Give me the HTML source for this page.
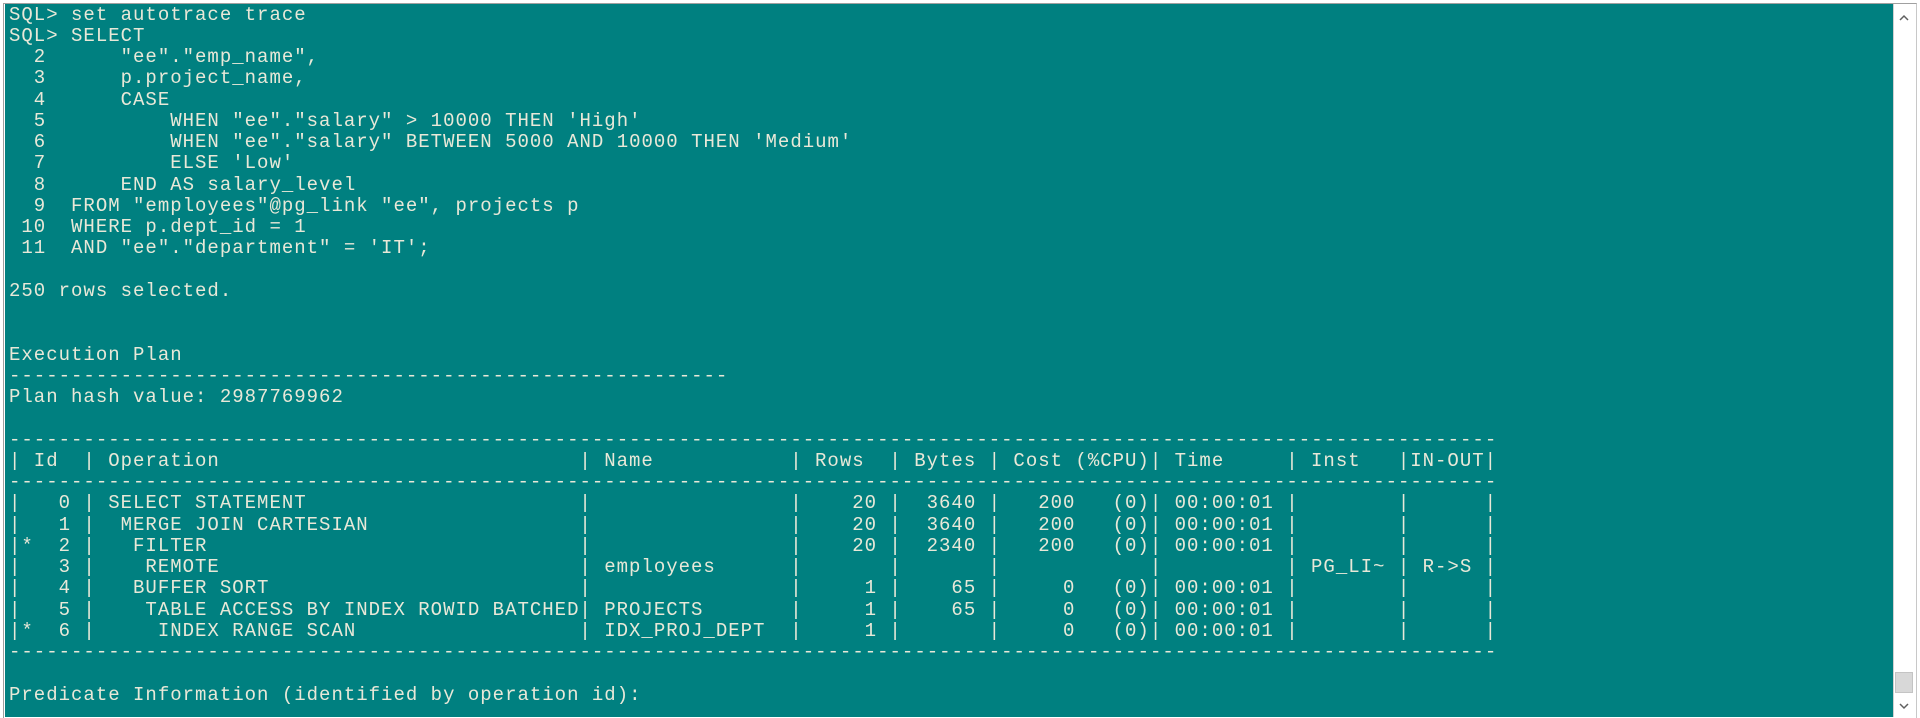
<!DOCTYPE html>
<html><head><meta charset="utf-8"><style>
html,body{margin:0;padding:0;background:#fff;width:1920px;height:717px;overflow:hidden}
#frame{position:absolute;left:3px;top:3px;width:1912px;height:714px;border-top:1px solid #a0a0a0;border-left:1px solid #a0a0a0;border-right:1px solid #c8c8c8;background:#fff}
#term{position:absolute;left:5px;top:4px;width:1888px;height:713px;background:#008080;overflow:hidden}
pre{margin:0;position:absolute;left:4px;top:0.5px;font-family:"Liberation Mono",monospace;font-size:19px;letter-spacing:1px;line-height:21.25px;color:#e8e8d8;white-space:pre}
.f{display:inline-block;white-space:pre}
.a{width:62px}.b{width:483.6px}.c{width:198.4px}.d{width:86.8px}.e{width:148.8px}.g{width:124px}.h{width:99.2px}.i{width:74.4px}
#sb{position:absolute;left:1893px;top:4px;width:20px;height:713px;background:#fff;border-left:1px solid #d0d0d0}
.ar{position:absolute;left:0;width:20px;height:20px}
#thumb{position:absolute;left:1px;top:668px;width:18px;height:21px;background:#d8d8d8;border:1px solid #c4c4c4;box-sizing:border-box}
</style></head><body>
<div id="frame"></div>
<div id="term"><pre>SQL&gt; set autotrace trace
SQL&gt; SELECT
  2      "ee"."emp_name",
  3      p.project_name,
  4      CASE
  5          WHEN "ee"."salary" &gt; 10000 THEN 'High'
  6          WHEN "ee"."salary" BETWEEN 5000 AND 10000 THEN 'Medium'
  7          ELSE 'Low'
  8      END AS salary_level
  9  FROM "employees"@pg_link "ee", projects p
 10  WHERE p.dept_id = 1
 11  AND "ee"."department" = 'IT';

250 rows selected.


Execution Plan
----------------------------------------------------------
Plan hash value: 2987769962

------------------------------------------------------------------------------------------------------------------------
|<span class="f a"> Id  </span>|<span class="f b"> Operation</span>|<span class="f c"> Name</span>|<span class="f d"> Rows  </span>|<span class="f d"> Bytes </span>|<span class="f e"> Cost (%CPU)</span>|<span class="f g"> Time     </span>|<span class="f h"> Inst   </span>|<span class="f i">IN-OUT</span>|
------------------------------------------------------------------------------------------------------------------------
|<span class="f a">   0 </span>|<span class="f b"> SELECT STATEMENT</span>|<span class="f c"></span>|<span class="f d">    20 </span>|<span class="f d">  3640 </span>|<span class="f e">   200   (0)</span>|<span class="f g"> 00:00:01 </span>|<span class="f h"></span>|<span class="f i"></span>|
|<span class="f a">   1 </span>|<span class="f b">  MERGE JOIN CARTESIAN</span>|<span class="f c"></span>|<span class="f d">    20 </span>|<span class="f d">  3640 </span>|<span class="f e">   200   (0)</span>|<span class="f g"> 00:00:01 </span>|<span class="f h"></span>|<span class="f i"></span>|
|<span class="f a">*  2 </span>|<span class="f b">   FILTER</span>|<span class="f c"></span>|<span class="f d">    20 </span>|<span class="f d">  2340 </span>|<span class="f e">   200   (0)</span>|<span class="f g"> 00:00:01 </span>|<span class="f h"></span>|<span class="f i"></span>|
|<span class="f a">   3 </span>|<span class="f b">    REMOTE</span>|<span class="f c"> employees</span>|<span class="f d"></span>|<span class="f d"></span>|<span class="f e"></span>|<span class="f g"></span>|<span class="f h"> PG_LI~ </span>|<span class="f i"> R-&gt;S </span>|
|<span class="f a">   4 </span>|<span class="f b">   BUFFER SORT</span>|<span class="f c"></span>|<span class="f d">     1 </span>|<span class="f d">    65 </span>|<span class="f e">     0   (0)</span>|<span class="f g"> 00:00:01 </span>|<span class="f h"></span>|<span class="f i"></span>|
|<span class="f a">   5 </span>|<span class="f b">    TABLE ACCESS BY INDEX ROWID BATCHED</span>|<span class="f c"> PROJECTS</span>|<span class="f d">     1 </span>|<span class="f d">    65 </span>|<span class="f e">     0   (0)</span>|<span class="f g"> 00:00:01 </span>|<span class="f h"></span>|<span class="f i"></span>|
|<span class="f a">*  6 </span>|<span class="f b">     INDEX RANGE SCAN</span>|<span class="f c"> IDX_PROJ_DEPT</span>|<span class="f d">     1 </span>|<span class="f d"></span>|<span class="f e">     0   (0)</span>|<span class="f g"> 00:00:01 </span>|<span class="f h"></span>|<span class="f i"></span>|
------------------------------------------------------------------------------------------------------------------------

Predicate Information (identified by operation id):</pre></div>
<div id="sb">
<svg class="ar" style="top:4px" viewBox="0 0 20 20"><path d="M6 12 L10 8 L14 12" fill="none" stroke="#606060" stroke-width="1.5"/></svg>
<div id="thumb"></div>
<svg class="ar" style="top:692px" viewBox="0 0 20 20"><path d="M6 8 L10 12 L14 8" fill="none" stroke="#606060" stroke-width="1.5"/></svg>
</div>
</body></html>
